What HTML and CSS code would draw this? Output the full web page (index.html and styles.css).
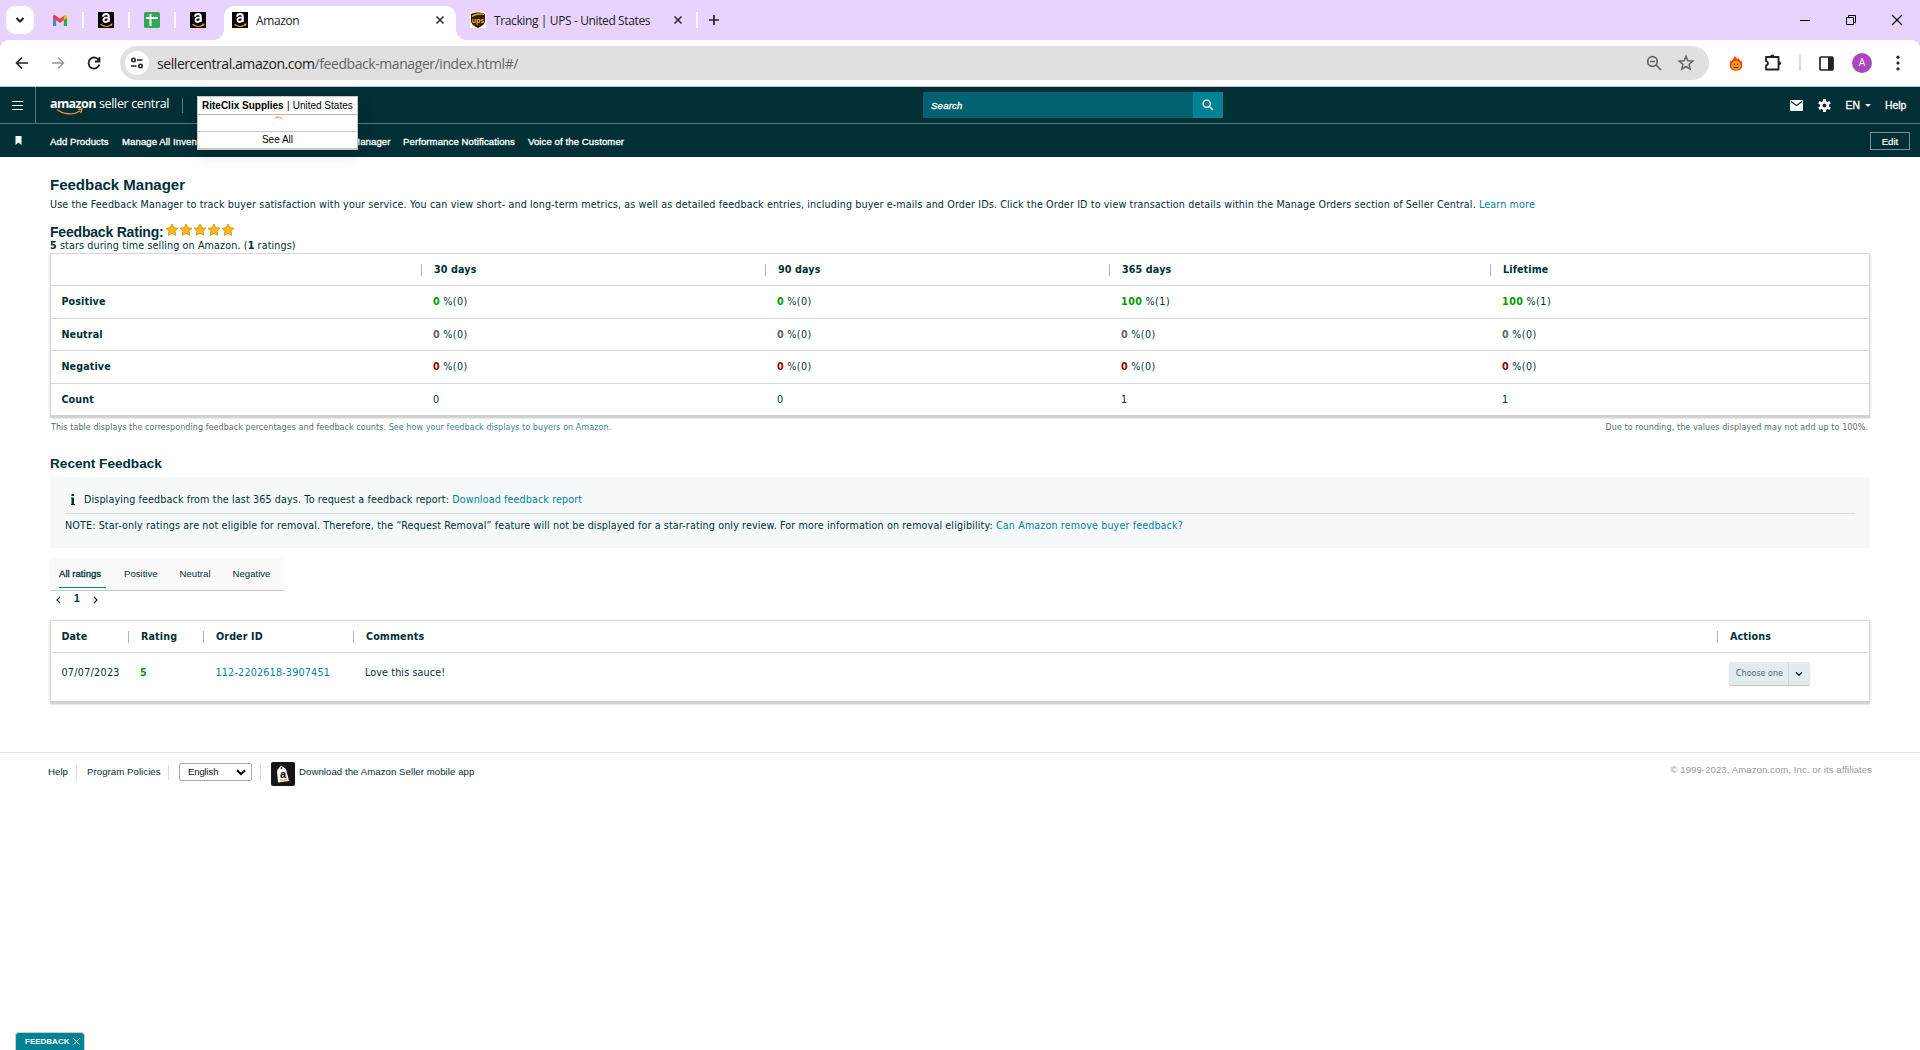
FILE: index.html
```
<!DOCTYPE html>
<html lang="en">
<head>
  <meta charset="UTF-8">
  <meta name="viewport" content="width=device-width, initial-scale=1.0">
  <title>Feedback Manager</title>
  <link rel="stylesheet" href="styles.css">
</head>
<body>
  <!-- Shared icons -->
  <svg class="defs" width="0" height="0">
    <symbol id="amz" viewBox="0 0 16 16">
      <rect width="16" height="16" fill="#000"/>
      <path d="M5 4.600C5.300 2.900 6.500 2.100 8.100 2.100c1.800 0 2.700.9 2.700 2.600v3.500c0 .6.300 1 .6 1.400M10.700 5.500C7.500 5.300 5.500 6 5.500 8c0 2.600 4.200 2.600 5.100-.5" fill="none" stroke="#fff" stroke-width="2"/>
      <path d="M2.500 12.300c3.500 2.800 7.600 2.600 10.600.5M12.200 12.200l1.800-.1-.6 1.600" fill="none" stroke="#f90" stroke-width="1.100"/>
    </symbol>
    <symbol id="close" viewBox="0 0 10 10">
      <path d="M1.500 1.500l7 7M8.500 1.500l-7 7" fill="none" stroke="#333" stroke-width="1.700"/>
    </symbol>
    <symbol id="star" viewBox="0 0 14 14">
      <path d="M7 1l1.800 3.800 4.200.5-3.100 2.800.9 4.200L7 10.200l-3.800 2.100.9-4.200L1 5.300l4.200-.5z" fill="#fdb913" stroke="#dd971f" stroke-width="1"/>
    </symbol>
  </svg>

  <!-- Browser tabs -->
  <div class="tabstrip">
    <div class="tab-search">
      <svg width="10" height="8" viewBox="0 0 10 8"><path d="M1.500 2l3.500 3.500L8.500 2" fill="none" stroke="#222" stroke-width="2"/></svg>
    </div>
    <div class="pinned pinned-first">
      <svg width="14" height="11" viewBox="0 0 14 11">
        <path d="M0 1.500V11h3.200V4z" fill="#4285f4"/>
        <path d="M14 1.500V11h-3.200V4z" fill="#34a853"/>
        <path d="M0 1.500C0 .2 1.600-.4 2.600.4L7 3.800 11.400.4 11.400 4.600 7 8 0 2.700z" fill="#ea4335"/>
        <path d="M10.800.9c1.300-1.400 3.200-.7 3.200.9v1l-3.200 2.400z" fill="#fbbc04"/>
      </svg>
    </div>
    <div class="pinned"><svg width="16" height="16"><use href="#amz"/></svg></div>
    <div class="pinned">
      <svg width="16" height="16" viewBox="0 0 16 16">
        <rect width="16" height="16" rx="1.500" fill="#34a853"/>
        <path d="M2 6h12M6.500 2v12" stroke="#fff" stroke-width="2"/>
      </svg>
    </div>
    <div class="pinned pinned-last"><svg width="16" height="16"><use href="#amz"/></svg></div>
    <div class="tab tab-active">
      <svg width="16" height="16"><use href="#amz"/></svg>
      <span class="tab-title">Amazon</span>
      <svg class="tab-close" width="10" height="10"><use href="#close"/></svg>
    </div>
    <div class="tab tab-ups">
      <svg width="16" height="16" viewBox="0 0 16 16">
        <rect width="16" height="16" fill="#fff"/>
        <path d="M1 2c4-2 10-2 14 0v7c0 3-3 5-7 7-4-2-7-4-7-7z" fill="#341b10"/>
        <path d="M2 3.500c4-2.200 8-2.300 12-1.500v1c-4-.6-8-.4-12 2z" fill="#f7b500"/>
        <text x="8" y="10.500" text-anchor="middle" class="ups-text">ups</text>
      </svg>
      <span class="tab-title">Tracking | UPS - United States</span>
      <svg class="tab-close" width="10" height="10"><use href="#close"/></svg>
    </div>
    <svg class="new-tab" width="12" height="12" viewBox="0 0 12 12"><path d="M6 1v10M1 6h10" stroke="#222" stroke-width="1.700"/></svg>
    <div class="window-buttons">
      <svg width="12" height="12" viewBox="0 0 12 12"><path d="M1 6.500h10" stroke="#000"/></svg>
      <svg width="12" height="12" viewBox="0 0 12 12"><path d="M1.500 3.500h7v7h-7zM3.500 3.500v-2h7v7h-2" fill="none" stroke="#000"/></svg>
      <svg width="12" height="12" viewBox="0 0 12 12"><path d="M1 1l10 10M11 1L1 11" stroke="#000" stroke-width="1.100"/></svg>
    </div>
  </div>

  <!-- Address bar -->
  <div class="toolbar">
    <svg class="nav-btn" width="14" height="14" viewBox="0 0 14 14"><path d="M13 7H2M7 1.500L1.500 7 7 12.500" fill="none" stroke="#222" stroke-width="1.700"/></svg>
    <svg class="nav-btn" width="14" height="14" viewBox="0 0 14 14"><path d="M1 7h11M7 1.500L12.500 7 7 12.500" fill="none" stroke="#999" stroke-width="1.500"/></svg>
    <svg class="nav-btn" width="14" height="14" viewBox="0 0 14 14"><path d="M12 4.500A5.500 5.500 0 1 0 12.400 8.500M12.500 1v4.500H8" fill="none" stroke="#222" stroke-width="1.800"/></svg>
    <div class="address">
      <div class="site-info">
        <svg width="14" height="12" viewBox="0 0 14 12"><g fill="none" stroke="#222" stroke-width="1.600"><circle cx="3.500" cy="3" r="1.700"/><path d="M7 3h5.500M1 9h5.500"/><circle cx="10.500" cy="9" r="1.700"/></g></svg>
      </div>
      <div class="url"><span>sellercentral.amazon.com</span>/feedback-manager/index.html#/</div>
      <svg class="zoom-icon" width="16" height="16" viewBox="0 0 16 16"><g fill="none" stroke="#5f6368" stroke-width="1.700"><circle cx="6.500" cy="6.500" r="4.800"/><path d="M4 6.500h5M10 10l5 5"/></g></svg>
      <svg width="18" height="18" viewBox="0 0 18 18"><path d="M9 2.200l1.900 4.500 4.900.4-3.700 3.200 1.100 4.800L9 12.500l-4.200 2.600 1.100-4.800-3.700-3.200 4.900-.4z" fill="none" stroke="#5f6368" stroke-width="1.500"/></svg>
    </div>
    <svg class="ext-flame" width="14" height="16" viewBox="0 0 14 16">
      <path d="M6 .3c.2 1.700 1.500 2.700 2.800 4.300.3-.8.500-1.400.5-2 .8 1.400 1.500 2.400 2.400 3.800l1-.8c.4 1.500.5 2.900.5 4.600 0 3.300-2.700 5.500-6.200 5.500S.8 13.500.8 10.200c0-1.800.1-3.200.5-4.600l1 .9C3 4.800 5.500 3.500 6 .3z" fill="#ee4312"/>
      <circle cx="7" cy="10.500" r="4.600" fill="#fba41f"/>
      <path d="M4.800 11.700c1 1.500 3.400 1.500 4.400 0M5.300 8.500v1.500M8.700 8.500v1.500" fill="none" stroke="#5d2412" stroke-width="1.100"/>
    </svg>
    <svg class="ext-puzzle" width="18" height="18" viewBox="0 0 18 18"><path d="M2 3h12.500v12.500H2v-4c2.500-.2 2.500-4.200 0-4.400z" fill="none" stroke="#222" stroke-width="1.800" stroke-linejoin="round"/><path d="M6.300 2.500a2 2 0 0 1 4 0zM15 7.300a2 2 0 0 1 0 4z" fill="#222"/></svg>
    <div class="toolbar-sep"></div>
    <svg width="15" height="15" viewBox="0 0 15 15"><rect x="1" y="1" width="13" height="13" rx="1" fill="none" stroke="#222" stroke-width="1.700"/><path d="M9 1h5v13H9z" fill="#222"/></svg>
    <div class="avatar">A</div>
    <svg width="4" height="16" viewBox="0 0 4 16" fill="#222"><circle cx="2" cy="2.200" r="1.600"/><circle cx="2" cy="8" r="1.600"/><circle cx="2" cy="13.800" r="1.600"/></svg>
  </div>

  <!-- Seller Central header -->
  <header class="header">
    <div class="header-top">
      <div class="menu">
        <svg width="11" height="9" viewBox="0 0 11 9"><path d="M0 .5h11M0 4.500h11M0 8.500h11" stroke="#fff"/></svg>
      </div>
      <div class="logo">
        <b>amazon</b><span>seller central</span>
        <svg class="smile" width="28" height="8" viewBox="0 0 28 8"><path d="M1 1.500c7 5.500 17 5.500 23 1.500M22 1.500l4-.5-1.300 4" fill="none" stroke="#f0932b" stroke-width="1.400"/></svg>
      </div>
      <div class="header-sep"></div>
      <div class="account">
        <div class="account-name"><b>RiteClix Supplies</b><i>|</i><span>United States</span></div>
        <div class="account-loading">
          <svg width="12" height="12" viewBox="0 0 12 12" fill="none"><circle cx="6" cy="6" r="5" stroke="#f3f3f3"/><path d="M3 2a5 5 0 0 1 7 1" stroke="#f7b24a" stroke-width="1.300"/></svg>
        </div>
        <div class="account-all">See All</div>
      </div>
      <div class="search">
        <div class="search-input">Search</div>
        <div class="search-btn">
          <svg width="12" height="12" viewBox="0 0 12 12"><g fill="none" stroke="#fff" stroke-width="1.400"><circle cx="4.700" cy="4.700" r="3.600"/><path d="M7.500 7.500l3.500 3.500"/></g></svg>
        </div>
      </div>
      <div class="header-right">
        <svg width="13" height="11" viewBox="0 0 13 11"><rect width="13" height="11" rx="1" fill="#fff"/><path d="M1 1.500l5.500 4 5.500-4" fill="none" stroke="#002f36" stroke-width="1.100"/></svg>
        <svg class="gear" width="13" height="13" viewBox="0 0 13 13"><circle cx="6.500" cy="6.500" r="3.300" fill="none" stroke="#fff" stroke-width="2.600"/><path d="M6.500 0v3M6.500 10v3M.9 3.200l2.600 1.600M9.500 8.200l2.600 1.600M.9 9.800l2.600-1.600M9.500 4.800l2.600-1.600" stroke="#fff" stroke-width="3"/></svg>
        <span class="lang">EN</span>
        <span class="caret"></span>
        <span class="help">Help</span>
      </div>
    </div>
    <nav class="header-nav">
      <svg class="bookmark" width="7" height="9" viewBox="0 0 7 9"><path d="M.5 0h6v9l-3-2.500L.5 9z" fill="#fff"/></svg>
      <a class="nav-products">Add Products</a>
      <a class="nav-inventory">Manage All Inventory</a>
      <a class="nav-orders">Orders</a>
      <a class="nav-campaign">Campaign Manager</a>
      <a class="nav-notif">Performance Notifications</a>
      <a class="nav-voice">Voice of the Customer</a>
      <button class="edit">Edit</button>
    </nav>
  </header>

  <main class="content">
    <h1>Feedback Manager</h1>
    <p class="intro">Use the Feedback Manager to track buyer satisfaction with your service. You can view short- and long-term metrics, as well as detailed feedback entries, including buyer e-mails and Order IDs. Click the Order ID to view transaction details within the Manage Orders section of Seller Central. <a>Learn more</a></p>
    <div class="rating">
      <h2>Feedback Rating:</h2>
      <svg width="14" height="14"><use href="#star"/></svg><svg width="14" height="14"><use href="#star"/></svg><svg width="14" height="14"><use href="#star"/></svg><svg width="14" height="14"><use href="#star"/></svg><svg width="14" height="14"><use href="#star"/></svg>
    </div>
    <p class="stars-text"><b>5</b> stars during time selling on Amazon. (<b>1</b> ratings)</p>

    <div class="table summary">
      <div class="row head"><div></div><div>30 days</div><div>90 days</div><div>365 days</div><div>Lifetime</div></div>
      <div class="row value pos"><div>Positive</div><div><b>0</b> %(0)</div><div><b>0</b> %(0)</div><div><b>100</b> %(1)</div><div><b>100</b> %(1)</div></div>
      <div class="row value neu"><div>Neutral</div><div><b>0</b> %(0)</div><div><b>0</b> %(0)</div><div><b>0</b> %(0)</div><div><b>0</b> %(0)</div></div>
      <div class="row value neg"><div>Negative</div><div><b>0</b> %(0)</div><div><b>0</b> %(0)</div><div><b>0</b> %(0)</div><div><b>0</b> %(0)</div></div>
      <div class="row"><div>Count</div><div>0</div><div>0</div><div>1</div><div>1</div></div>
    </div>
    <div class="notes">
      <span>This table displays the corresponding feedback percentages and feedback counts. <a>See how your feedback displays to buyers on Amazon.</a></span>
      <span class="rounding">Due to rounding, the values displayed may not add up to 100%.</span>
    </div>

    <h2 class="recent">Recent Feedback</h2>
    <div class="info">
      <div class="info-line">
        <svg width="4" height="11" viewBox="0 0 4 11"><path d="M.5 0h2.500v2H.5zM0 3.500h3V10h1v1H0v-1h.5V4.500H0z" fill="#002f36"/></svg>
        <span>Displaying feedback from the last 365 days. To request a feedback report: <a>Download feedback report</a></span>
      </div>
      <div class="info-note">NOTE: Star-only ratings are not eligible for removal. Therefore, the “Request Removal” feature will not be displayed for a star-rating only review. For more information on removal eligibility: <a>Can Amazon remove buyer feedback?</a></div>
    </div>

    <div class="filters">
      <div class="active">All ratings</div>
      <div>Positive</div>
      <div>Neutral</div>
      <div>Negative</div>
    </div>
    <div class="pager">
      <svg width="5" height="8" viewBox="0 0 5 8"><path d="M4 1L1 4l3 3" fill="none" stroke="#002f36" stroke-width="1.200"/></svg>
      <span>1</span>
      <svg width="5" height="8" viewBox="0 0 5 8"><path d="M1 1l3 3-3 3" fill="none" stroke="#002f36" stroke-width="1.200"/></svg>
    </div>

    <div class="table feedback">
      <div class="row head"><div>Date</div><div>Rating</div><div>Order ID</div><div>Comments</div><div>Actions</div></div>
      <div class="row entry">
        <div class="date">07/07/2023</div>
        <div class="good">5</div>
        <div class="order"><a>112-2202618-3907451</a></div>
        <div>Love this sauce!</div>
        <div class="choose">
          <span>Choose one</span>
          <i><svg width="8" height="6" viewBox="0 0 8 6"><path d="M1 1.200l3 3 3-3" fill="none" stroke="#002f36" stroke-width="1.400"/></svg></i>
        </div>
      </div>
    </div>
  </main>

  <footer class="footer">
    <a class="f-help">Help</a>
    <a class="f-policies">Program Policies</a>
    <div class="f-lang">
      <div class="select">
        <span>English</span>
        <svg width="10" height="7" viewBox="0 0 10 7"><path d="M1 1.200l4 4 4-4" fill="none" stroke="#000" stroke-width="2"/></svg>
      </div>
    </div>
    <svg class="app-icon" width="24" height="24" viewBox="0 0 24 24">
      <rect width="24" height="24" rx="2" fill="#151515"/>
      <path d="M6 8.500l4-5L15 7l3 12-11 1.500z" fill="#fff"/>
      <circle cx="10.500" cy="6" r="1" fill="#151515"/>
      <text x="12" y="15.500" text-anchor="middle" class="app-letter">a</text>
      <path d="M9 17.500c2.500 1.300 5 1 7-.5" fill="none" stroke="#f90" stroke-width="1.100"/>
    </svg>
    <a class="f-app">Download the Amazon Seller mobile app</a>
    <span class="copyright">© 1999-2023, Amazon.com, Inc. or its affiliates</span>
  </footer>

  <div class="feedback-tab">
    <span>FEEDBACK</span>
    <svg width="7" height="7" viewBox="0 0 7 7"><path d="M.5.5l6 6M6.500.5l-6 6" stroke="#fff"/></svg>
  </div>
</body>
</html>
```

FILE: styles.css
```
* {
  box-sizing: border-box;
}
body {
  margin: 0;
  height: 1050px;
  background: #fff;
  color: #002f36;
  font-family: "DejaVu Sans", Verdana, sans-serif;
  font-size: 9.6px;
  overflow: hidden;
}
svg {
  display: block;
  flex: none;
}
h1, h2, p {
  margin: 0;
}
a {
  color: #008296;
  text-decoration: none;
}
.defs {
  position: absolute;
}

/* browser tabs */
.tabstrip {
  display: flex;
  height: 50px;
  background: #e8d3ff;
  font-family: "Open Sans", sans-serif;
  font-size: 12px;
  letter-spacing: -0.38px;
  color: #222;
}
.tab-search {
  display: flex;
  align-items: center;
  justify-content: center;
  width: 28px;
  height: 28px;
  margin: 6px 0 0 6px;
  border-radius: 9px;
  background: #fff;
}
.pinned {
  display: flex;
  align-items: center;
  justify-content: center;
  width: 46px;
  height: 16px;
  margin-top: 12px;
  border-right: 2px solid #fff;
}
.pinned-first {
  width: 50px;
  padding-left: 4px;
}
.pinned-last {
  width: 40px;
  margin-right: 8px;
  padding-left: 4px;
  border-right: 0;
}
.tab {
  position: relative;
  display: flex;
  align-items: center;
  margin-top: 6px;
}
.tab-title {
  margin: 2px 0 0 8px;
  line-height: 16px;
  white-space: nowrap;
}
.tab .tab-close {
  margin-left: auto;
}
.tab-active {
  width: 232px;
  height: 34px;
  padding: 0 11px 6px 8px;
  background: #fff;
  border-radius: 10px 10px 0 0;
}
.tab-active::before,
.tab-active::after {
  content: "";
  position: absolute;
  bottom: 0;
  width: 10px;
  height: 10px;
}
.tab-active::before {
  left: -10px;
  background: radial-gradient(circle at 0 0, transparent 9.5px, #fff 10px);
}
.tab-active::after {
  right: -10px;
  background: radial-gradient(circle at 100% 0, transparent 9.5px, #fff 10px);
}
.tab-ups {
  width: 242px;
  height: 16px;
  margin-top: 12px;
  padding: 0 13px 0 14px;
  border-right: 2px solid #fff;
}
.ups-text {
  font: bold 7px "Liberation Sans", sans-serif;
  letter-spacing: 0;
  fill: #f7b500;
}
.new-tab {
  margin: 14px 0 0 10px;
}
.window-buttons {
  display: flex;
  gap: 34px;
  margin: 14px 17px 0 auto;
}

/* address bar */
.toolbar {
  position: relative;
  display: flex;
  align-items: center;
  height: 47px;
  margin-top: -10px;
  padding-right: 20px;
  border-bottom: 1px solid #c5c9cb;
  background: #fff;
}
.toolbar::before,
.toolbar::after {
  content: "";
  position: absolute;
  top: 0;
  width: 8px;
  height: 8px;
}
.toolbar::before {
  left: 0;
  background: radial-gradient(circle at 100% 100%, transparent 7.5px, #e8d3ff 8px);
}
.toolbar::after {
  right: 0;
  background: radial-gradient(circle at 0 100%, transparent 7.5px, #e8d3ff 8px);
}
.nav-btn {
  margin-left: 22px;
}
.nav-btn:first-child {
  margin-left: 15px;
}
.address {
  display: flex;
  align-items: center;
  width: 1590px;
  height: 34px;
  margin-left: 19px;
  padding: 0 14px 0 5px;
  border-radius: 17px;
  background: #e0e0e0;
}
.site-info {
  display: flex;
  align-items: center;
  justify-content: center;
  width: 24px;
  height: 24px;
  border-radius: 50%;
  background: #fff;
}
.url {
  margin-left: 8px;
  font: 14px "Open Sans", sans-serif;
  letter-spacing: -0.43px;
  color: #666;
}
.url span {
  color: #222;
}
.zoom-icon {
  margin: 0 15px 0 auto;
}
.ext-flame {
  margin-left: 20px;
}
.ext-puzzle {
  margin: 0 17px 0 21px;
}
.toolbar-sep {
  width: 2px;
  height: 16px;
  margin-right: 18px;
  background: #e8d3ff;
}
.avatar {
  width: 20px;
  height: 20px;
  margin: 0 24px 0 18px;
  border-radius: 50%;
  background: #ab47bc;
  color: #fff;
  font: 10px/20px Roboto, sans-serif;
  text-align: center;
}

/* seller central header */
.header {
  height: 70px;
  background: #002f36;
  color: #fff;
  font-family: "Liberation Sans", Arial, sans-serif;
}
.header-top {
  display: flex;
  height: 37px;
  border-bottom: 1px solid #5c757b;
}
.menu {
  display: flex;
  align-items: center;
  width: 36px;
  padding-left: 12px;
  border-right: 1px solid #5c757b;
}
.logo {
  position: relative;
  width: 119px;
  margin-left: 14px;
  font: 12.5px/34px "Open Sans", sans-serif;
  white-space: nowrap;
}
.logo b {
  display: inline-block;
  width: 49px;
  letter-spacing: -0.6px;
}
.logo span {
  letter-spacing: -0.35px;
}
.smile {
  position: absolute;
  left: 6px;
  top: 21px;
}
.header-sep {
  width: 1px;
  height: 15px;
  margin: 11px 14px 0 13px;
  background: #5c757b;
}
.account {
  z-index: 2;
  width: 161px;
  height: 54px;
  margin-top: 9px;
  border: 1px solid #c4c8ca;
  border-bottom-width: 2px;
  background: #fff;
  color: #000;
  font-size: 10px;
  box-shadow: 0 4px 14px rgba(0, 0, 0, 0.15);
}
.account-name {
  display: flex;
  height: 18px;
  padding-left: 4px;
  border-bottom: 1px solid #b4b8ba;
  line-height: 18px;
  white-space: nowrap;
}
.account-name i {
  width: 9px;
  text-align: center;
  font-style: normal;
}
.account-loading {
  display: flex;
  justify-content: center;
  height: 17px;
  padding-top: 1px;
  border-bottom: 1px solid #c4c8ca;
}
.account-all {
  line-height: 16px;
  text-align: center;
}
.search {
  display: flex;
  width: 300px;
  height: 26px;
  margin: 5px 0 0 565px;
}
.search-input {
  width: 270px;
  padding-left: 8px;
  background: #006170;
  font-size: 9.6px;
  font-style: italic;
  line-height: 27px;
  letter-spacing: 0.2px;
  -webkit-text-stroke: 0.3px #fff;
}
.search-btn {
  display: flex;
  align-items: center;
  justify-content: center;
  width: 30px;
  background: #008296;
}
.header-right {
  display: flex;
  align-items: center;
  margin-left: auto;
  padding-right: 12px;
  font-size: 10.4px;
  -webkit-text-stroke: 0.3px #fff;
}
.gear {
  margin: 0 15px;
}
.caret {
  margin: 1px 14px 0 5px;
  border: 3px solid transparent;
  border-top-color: #fff;
  border-bottom: 0;
}
.help {
  width: 23px;
}
.header-nav {
  display: flex;
  height: 33px;
  font-size: 9.6px;
  line-height: 36px;
  letter-spacing: 0.08px;
}
.header-nav a {
  color: #fff;
  white-space: nowrap;
  -webkit-text-stroke: 0.3px #fff;
}
.bookmark {
  margin: 12px 28px 0 15px;
}
.header-nav .nav-products {
  width: 72px;
}
.header-nav .nav-inventory {
  width: 111px;
}
.header-nav .nav-orders {
  width: 72px;
}
.header-nav .nav-campaign {
  width: 98px;
}
.header-nav .nav-notif {
  width: 125px;
}
.edit {
  width: 40px;
  height: 18px;
  margin: 8px 10px 0 auto;
  padding: 0;
  border: 1px solid #7b8f94;
  background: transparent;
  color: #fff;
  font: 9.6px "Liberation Sans", sans-serif;
  -webkit-text-stroke: 0.2px #fff;
}

/* page content */
.content {
  height: 595px;
  padding: 20px 50px 0;
  letter-spacing: 0.12px;
}
h1, h2 {
  font-family: "Liberation Sans", Arial, sans-serif;
  font-size: 15px;
  line-height: 16px;
  letter-spacing: 0;
  white-space: nowrap;
}
.intro {
  margin-top: 5px;
  line-height: 14px;
  white-space: nowrap;
}
.rating {
  display: flex;
  height: 16px;
  margin-top: 11px;
}
.rating h2 {
  width: 115px;
  font-size: 14px;
  line-height: 18px;
  letter-spacing: -0.2px;
}
.stars-text {
  height: 14px;
  line-height: 14px;
}
.table {
  border: 1px solid #d5dbdb;
  border-bottom: 2px solid #ccd1d1;
  box-shadow: 0 1px 2px rgba(0, 0, 0, 0.25);
}
.row {
  display: grid;
  align-items: center;
  height: 32.5px;
  border-top: 1px solid #d5dbdb;
}
.row > div {
  padding-left: 12px;
}
.row > div:first-child {
  padding-left: 10.4px;
}
.summary {
  height: 164px;
}
.summary .row {
  grid-template-columns: 370px 344px 344px 381px 1fr;
}
.summary .row > div:first-child,
.head {
  font-weight: bold;
}
.row.head {
  height: 31px;
  border-top: 0;
}
.head > div + div {
  border-left: 1px solid #aab7b8;
  line-height: 12px;
}
.value > div + div {
  letter-spacing: 0.5px;
  word-spacing: -0.6px;
}
.pos b, .good {
  color: #090;
}
.good {
  font-weight: bold;
}
.neu b {
  color: #666;
}
.neg b {
  color: #900;
}
.notes {
  display: flex;
  justify-content: space-between;
  margin-top: 5px;
  padding: 0 2px 0 1px;
  color: #556b70;
  font-size: 8px;
  line-height: 12px;
  letter-spacing: 0.065px;
}
.rounding {
  letter-spacing: 0.09px;
}
.notes a {
  color: #3f7f96;
}
.recent {
  margin-top: 22px;
  font-size: 13.6px;
}
.info {
  height: 71px;
  margin-top: 5px;
  padding: 8px 15px 0;
  background: #f5f9fa;
}
.info-line {
  display: flex;
  align-items: center;
  gap: 9px;
  height: 29px;
  padding-left: 6px;
  border-bottom: 1px solid #d5dbdb;
}
.info-note {
  line-height: 24px;
}
.filters {
  display: flex;
  width: 234px;
  height: 33px;
  margin-top: 10px;
  padding-left: 9px;
  border-bottom: 1px solid #c4c8ca;
  background: #fafafa;
  font: 9.6px/31px "Liberation Sans", sans-serif;
  letter-spacing: 0;
}
.filters div {
  flex: none;
  height: 30px;
  margin-right: 22px;
  white-space: nowrap;
}
.filters .active {
  width: 47px;
  margin-right: 18px;
  border-bottom: 1px solid #008296;
  -webkit-text-stroke: 0.3px #002f36;
}
.pager {
  display: flex;
  align-items: center;
  height: 17px;
  padding-left: 6px;
  font: bold 10.4px "Liberation Sans", sans-serif;
}
.pager span {
  margin: 0 13px 2px;
}
.feedback {
  height: 83px;
  margin-top: 12px;
}
.feedback .row {
  grid-template-columns: 77px 75px 150px 1364px 1fr;
}
.row.entry {
  height: 50px;
  align-items: start;
  line-height: 40px;
}
.entry .date {
  letter-spacing: 0.3px;
}
.entry .order {
  padding-left: 12.5px;
  letter-spacing: 0.2px;
}
.row.entry .choose {
  display: flex;
  width: 81px;
  height: 23px;
  margin: 9px 0 0 12px;
  padding-left: 7px;
  border-radius: 2px;
  background: #e3eced;
  box-shadow: 0 1px 1px rgba(0, 0, 0, 0.25);
  color: #4d6469;
  font-size: 8px;
  line-height: 23px;
  letter-spacing: 0;
}
.choose span {
  width: 52px;
  white-space: nowrap;
}
.choose i {
  display: flex;
  align-items: center;
  padding-left: 6px;
  border-left: 1px solid #cdd8d9;
}

/* footer */
.footer {
  display: flex;
  height: 40px;
  padding: 9px 48px 0;
  border-top: 1px solid #e5e5e5;
  font: 9.6px/20px "Liberation Sans", sans-serif;
  letter-spacing: 0.07px;
}
.footer a {
  color: #002f36;
  white-space: nowrap;
}
.footer .f-help,
.footer .f-policies {
  height: 15px;
  margin-top: 3px;
  border-right: 1px solid #ddd;
  line-height: 14px;
}
.f-help {
  width: 29px;
}
.footer .f-policies {
  width: 92px;
  padding-left: 10px;
}
.f-lang {
  width: 92px;
  height: 18px;
  margin-top: 1px;
  padding-left: 10px;
  border-right: 1px solid #ddd;
}
.select {
  display: flex;
  align-items: center;
  justify-content: space-between;
  width: 73px;
  height: 18px;
  padding: 0 5px 0 8px;
  border: 1px solid #aaa;
  border-radius: 2px;
  color: #111;
  letter-spacing: -0.15px;
}
.app-icon {
  margin: 0 4px 0 10px;
}
.app-letter {
  font: bold 11px "Liberation Sans", sans-serif;
  fill: #000;
}
.copyright {
  margin: -2px 0 0 auto;
  color: #999;
}

/* survey tab at the bottom of the page */
.feedback-tab {
  position: absolute;
  left: 15px;
  bottom: 0;
  display: flex;
  align-items: center;
  justify-content: space-between;
  width: 70px;
  height: 18px;
  padding: 0 4px 0 9px;
  border: 1px solid #ccc;
  border-bottom: 0;
  border-radius: 4px 4px 0 0;
  background: #008296;
  color: #fff;
  font: bold 8px "Liberation Sans", sans-serif;
}
```
